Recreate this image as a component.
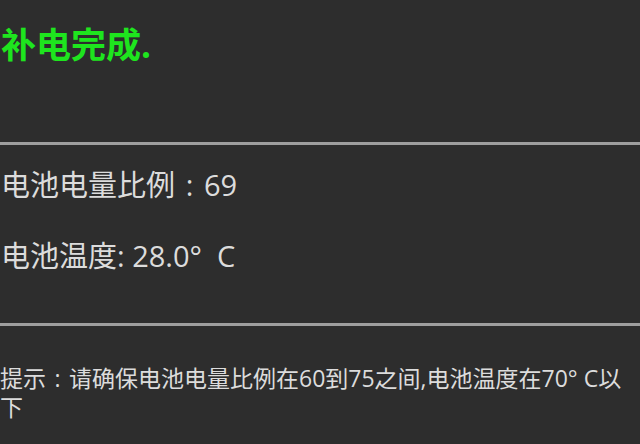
import React from 'react';

const font = { fontFamily: '"Open Sans", "Noto Sans CJK JP", "Noto Sans CJK SC", sans-serif' };

// full-width colon, drawn centred in its box the way the device font does it
function Colon({ w }: { w: string }) {
  return <span className={`inline-block text-center ${w}`}>:</span>;
}

export default function App() {
  return (
    <div className="w-[640px] h-[444px] overflow-hidden bg-[#2d2d2d]" style={font}>
      <div className="h-[142px] pt-[22px] pl-[1px]">
        <p className="text-[35px] leading-[46px] font-bold text-[#1ee51e]">补电完成.</p>
      </div>
      <div className="h-[3px] bg-[#9e9e9e]" />
      <div className="h-[178px] pt-[20px] pl-[1px] text-[#dcdcdc] text-[29px] leading-[40px]">
        <p>
          电池电量比例<Colon w="w-[29px]" />69
        </p>
        <p className="mt-[31px]">电池温度: 28.0°&nbsp; C</p>
      </div>
      <div className="h-[3px] bg-[#9e9e9e]" />
      <div className="pt-[38px] text-[#dcdcdc] text-[23px] leading-[29px]">
        <p>
          提示<Colon w="w-[23px]" />请确保电池电量比例在60到75之间,电池温度在70° C以下
        </p>
      </div>
    </div>
  );
}
